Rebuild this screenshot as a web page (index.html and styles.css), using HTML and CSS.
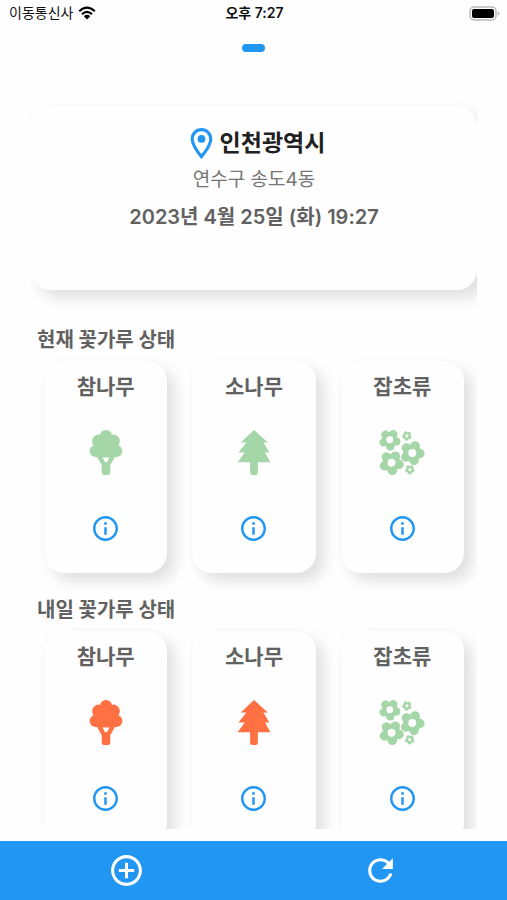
FILE: index.html
```html
<!DOCTYPE html>
<html lang="ko">
<head>
<meta charset="utf-8">
<meta name="viewport" content="width=device-width, initial-scale=1">
<title>꽃가루 상태</title>
<link rel="stylesheet" href="styles.css">
</head>
<body>
<svg class="sprite" aria-hidden="true">
  <symbol id="oak" viewBox="0 0 32 44">
    <circle cx="16" cy="6" r="6"/><circle cx="9" cy="11" r="6.500"/><circle cx="23" cy="11" r="6.500"/>
    <circle cx="6" cy="20.500" r="6"/><circle cx="26" cy="20.500" r="6"/>
    <path d="M8 9h16l3 17.400H5z"/>
    <path fill-rule="evenodd" d="M6.500 25h19l-5.300 9.500V41.500Q20.200 44 18 44h-4Q11.800 44 11.800 41.500V34.500zM12.600 27L14.800 31Q16 32 17.200 31L19.400 27z"/>
  </symbol>
  <symbol id="pine" viewBox="0 0 32 44">
    <path d="M16 0L29.500 12.300h-4.300L31 22h-4.200L32 31.500H19.800V41.500Q19.800 44 17.500 44h-3Q12.200 44 12.200 41.500V31.500H0L7 22H.8L8.500 12.300H3z"/>
  </symbol>
  <symbol id="flower" viewBox="-10 -10 20 20" overflow="visible">
    <circle r="8"/><circle cx="6.800" r="4.200"/><circle cx="6.800" r="4.200" transform="rotate(72)"/><circle cx="6.800" r="4.200" transform="rotate(144)"/><circle cx="6.800" r="4.200" transform="rotate(216)"/><circle cx="6.800" r="4.200" transform="rotate(288)"/>
    <circle r="3.500" fill="#fff"/>
  </symbol>
  <symbol id="weeds" viewBox="0 0 46 46">
    <use href="#flower" x="-10" y="-10" width="20" height="20" transform="translate(10.500 10) rotate(86)"/>
    <use href="#flower" x="-11.500" y="-11.500" width="23" height="23" transform="translate(33.500 23.500) rotate(4)"/>
    <use href="#flower" x="-11.500" y="-11.500" width="23" height="23" transform="translate(12.300 33.500) rotate(84)"/>
    <use href="#flower" x="-4.500" y="-4.500" width="9" height="9" transform="translate(28 6) rotate(28)"/>
    <use href="#flower" x="-4.500" y="-4.500" width="9" height="9" transform="translate(31 40.500) rotate(20)"/>
  </symbol>
  <symbol id="info" viewBox="2 2 20 20">
    <path d="M11 7h2v2h-2zm0 4h2v6h-2zm1-9C6.480 2 2 6.480 2 12s4.480 10 10 10 10-4.480 10-10S17.520 2 12 2zm0 18c-4.410 0-8-3.590-8-8s3.590-8 8-8 8 3.590 8 8-3.590 8-8 8z"/>
  </symbol>
</svg>

<div class="app">
  <header class="status">
    <div class="carrier">
      <span>이동통신사</span>
      <svg class="wifi" viewBox="0 0 18 14" aria-hidden="true">
        <path d="M1.200 5.200Q9-2 16.800 5.200M4 8.200Q9 3.600 14 8.200" fill="none" stroke="#000" stroke-width="2.200"/>
        <path d="M5.800 10.200Q9 7.400 12.200 10.200L9 13.400z"/>
      </svg>
    </div>
    <time class="clock">오후 7:27</time>
    <svg class="battery" viewBox="0 0 31 15" aria-hidden="true">
      <rect x="1" y="1" width="26" height="13" rx="4" fill="#fff" stroke="#b9b9b9" stroke-width="1.500"/>
      <rect x="3" y="3" width="22" height="9" rx="2"/>
      <path d="M28.500 5.500Q30.500 6 30.500 7.500T28.500 9.500z" fill="#b9b9b9"/>
    </svg>
  </header>
  <div class="pager"></div>

  <main class="content">
    <section class="place">
      <h1 class="city">
        <svg class="pin" viewBox="0 0 24 24" aria-hidden="true"><path d="M12 2C8.130 2 5 5.130 5 9c0 5.250 7 13 7 13s7-7.750 7-13c0-3.870-3.130-7-7-7zM7 9c0-2.760 2.240-5 5-5s5 2.240 5 5c0 2.880-2.880 7.190-5 9.880C9.920 16.210 7 11.850 7 9z"/><circle cx="12" cy="9" r="2.500"/></svg>
        <span>인천광역시</span>
      </h1>
      <p class="district">연수구 송도4동</p>
      <p class="date">2023년 4월 25일 (화) 19:27</p>
    </section>

    <section class="forecast">
      <h2 class="heading">현재 꽃가루 상태</h2>
      <div class="cards">
        <article class="card">
          <h3 class="name">참나무</h3>
          <svg class="plant low" aria-hidden="true"><use href="#oak"/></svg>
          <button class="info" type="button" aria-label="참나무 정보"><svg><use href="#info"/></svg></button>
        </article>
        <article class="card">
          <h3 class="name">소나무</h3>
          <svg class="plant low" aria-hidden="true"><use href="#pine"/></svg>
          <button class="info" type="button" aria-label="소나무 정보"><svg><use href="#info"/></svg></button>
        </article>
        <article class="card">
          <h3 class="name">잡초류</h3>
          <svg class="plant low" aria-hidden="true"><use href="#weeds"/></svg>
          <button class="info" type="button" aria-label="잡초류 정보"><svg><use href="#info"/></svg></button>
        </article>
      </div>
    </section>

    <section class="forecast">
      <h2 class="heading">내일 꽃가루 상태</h2>
      <div class="cards">
        <article class="card">
          <h3 class="name">참나무</h3>
          <svg class="plant high" aria-hidden="true"><use href="#oak"/></svg>
          <button class="info" type="button" aria-label="참나무 정보"><svg><use href="#info"/></svg></button>
        </article>
        <article class="card">
          <h3 class="name">소나무</h3>
          <svg class="plant high" aria-hidden="true"><use href="#pine"/></svg>
          <button class="info" type="button" aria-label="소나무 정보"><svg><use href="#info"/></svg></button>
        </article>
        <article class="card">
          <h3 class="name">잡초류</h3>
          <svg class="plant low" aria-hidden="true"><use href="#weeds"/></svg>
          <button class="info" type="button" aria-label="잡초류 정보"><svg><use href="#info"/></svg></button>
        </article>
      </div>
    </section>
  </main>

  <nav class="toolbar">
    <button class="tool" type="button" aria-label="추가">
      <svg viewBox="0 0 24 24"><path d="M13 7h-2v4H7v2h4v4h2v-4h4v-2h-4V7zm-1-5C6.480 2 2 6.480 2 12s4.480 10 10 10 10-4.480 10-10S17.520 2 12 2zm0 18c-4.410 0-8-3.590-8-8s3.590-8 8-8 8 3.590 8 8-3.590 8-8 8z"/></svg>
    </button>
    <button class="tool" type="button" aria-label="새로고침">
      <svg viewBox="0 0 24 24"><path d="M17.650 6.350C16.200 4.900 14.210 4 12 4c-4.420 0-7.990 3.580-7.990 8s3.570 8 7.990 8c3.730 0 6.840-2.550 7.730-6h-2.080c-.82 2.330-3.040 4-5.650 4-3.310 0-6-2.690-6-6s2.690-6 6-6c1.660 0 3.140.69 4.220 1.780L13 11h7V4l-2.350 2.350z"/></svg>
    </button>
  </nav>
</div>
</body>
</html>
```
FILE: styles.css
```css
* {
  box-sizing: border-box;
}

body {
  margin: 0;
  background: #fefefe;
  color: #616161;
  font-family: Inter, "Noto Sans CJK KR", sans-serif;
}

h1, h2, h3, p {
  margin: 0;
}

button {
  padding: 0;
  border: 0;
  background: none;
}

svg {
  display: block;
}

.sprite {
  position: absolute;
  width: 0;
  height: 0;
}

.app {
  display: flex;
  flex-direction: column;
  height: 100vh;
}

.status {
  display: grid;
  grid-template-columns: 1fr auto 1fr;
  align-items: center;
  height: 26px;
  padding: 0 7px 0 9px;
  color: #111;
  font-size: 14px;
  line-height: 26px;
}

.carrier {
  display: flex;
  align-items: center;
  gap: 5px;
}

.wifi {
  width: 18px;
  height: 14px;
}

.clock {
  font-weight: 600;
}

.battery {
  width: 31px;
  height: 15px;
  justify-self: end;
}

.pager {
  flex: none;
  width: 23px;
  height: 8px;
  margin: 18px auto 0;
  border-radius: 4px;
  background: #2196f3;
}

.content {
  flex: 1;
  min-height: 0;
  margin: 50px 30px 12px 31px;
  overflow: hidden;
}

.place,
.card {
  display: flex;
  flex-direction: column;
  align-items: center;
  border-radius: 20px;
  background: #fefefe;
  box-shadow: 8px 8px 14px #e0e0e0, -2px -2px 3px #fcfcfc;
}

.place {
  height: 184px;
  margin-top: 4px;
  padding-top: 19px;
}

.city {
  display: flex;
  align-items: center;
  height: 36px;
  color: #212121;
  font-size: 23px;
  line-height: 36px;
}

.pin {
  width: 37px;
  height: 37px;
  fill: #2196f3;
}

.district {
  color: #757575;
  font-size: 19px;
  line-height: 38px;
}

.date {
  font-size: 20px;
  font-weight: 600;
  line-height: 36px;
}

.forecast {
  margin-top: 35px;
}

.forecast + .forecast {
  margin-top: 22px;
}

.heading {
  padding-left: 6px;
  font-size: 20px;
  line-height: 30px;
}

.cards {
  display: grid;
  grid-template-columns: repeat(3, 1fr);
  gap: 25px;
  margin-top: 6px;
  padding: 0 13px;
}

.card {
  height: 212px;
  padding-top: 11px;
}

.name {
  font-size: 21px;
  line-height: 30px;
}

.plant {
  width: 46px;
  height: 45px;
  margin-top: 28px;
}

.low {
  fill: #a5d6a7;
}

.high {
  fill: #ff7043;
}

.info {
  margin-top: 41px;
}

.info svg {
  width: 25px;
  height: 25px;
  fill: #2196f3;
}

.toolbar {
  display: flex;
  flex: none;
  height: 59px;
  background: #2196f3;
}

.tool {
  flex: 1;
  display: grid;
  place-items: center;
}

.tool svg {
  width: 37px;
  height: 37px;
  fill: #fff;
}
```
